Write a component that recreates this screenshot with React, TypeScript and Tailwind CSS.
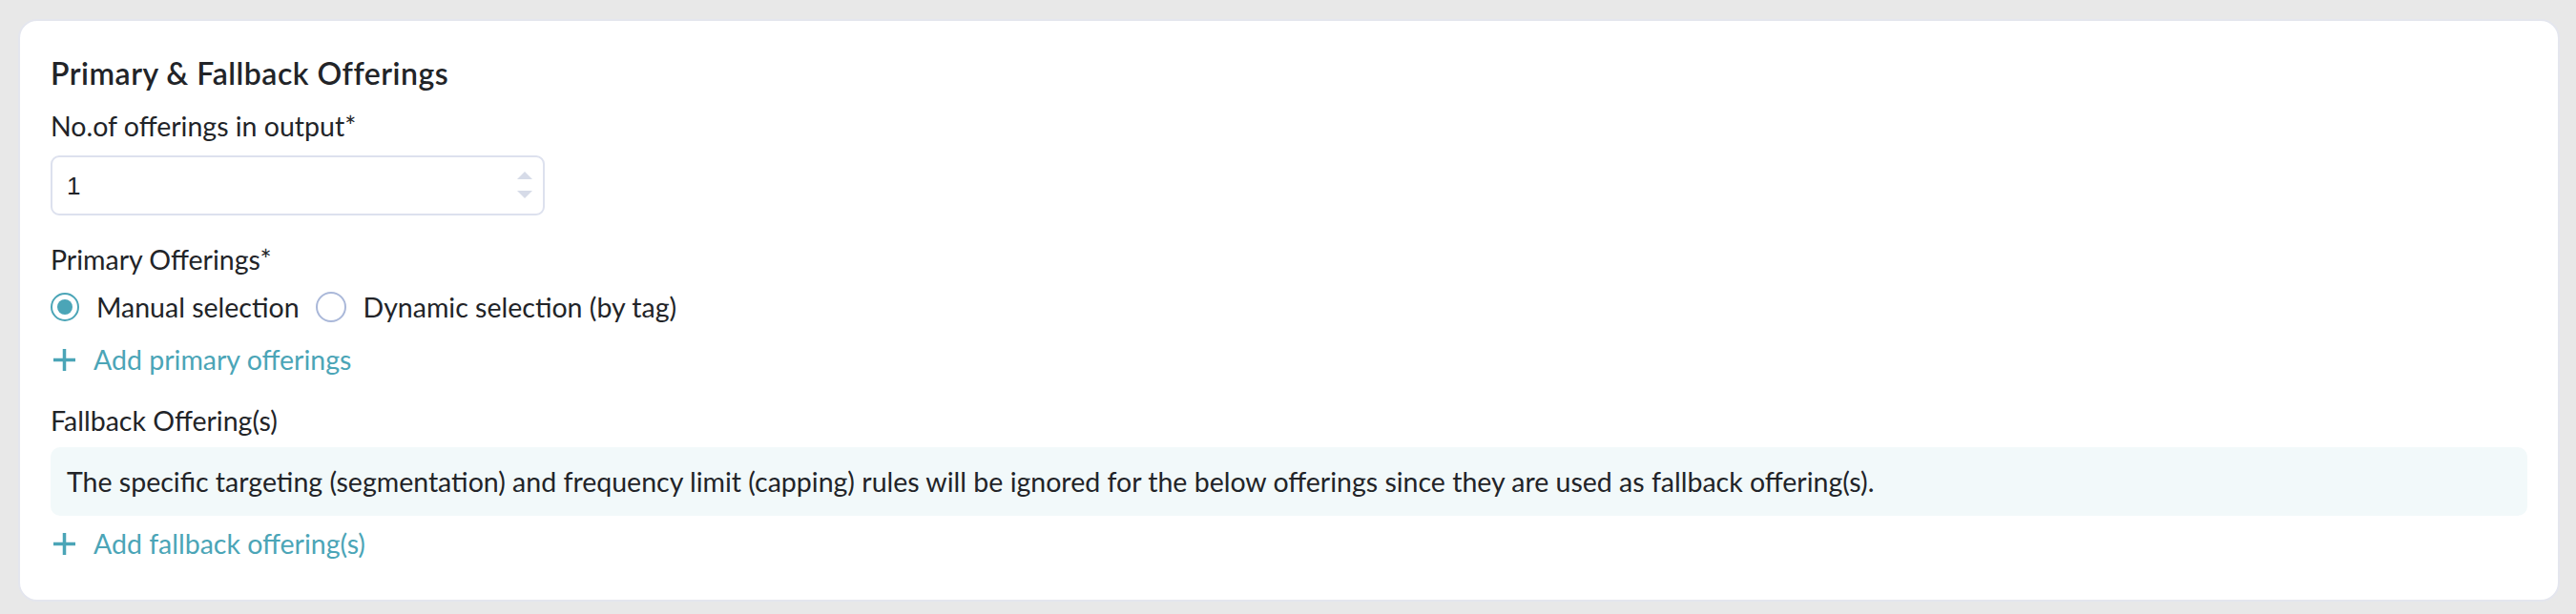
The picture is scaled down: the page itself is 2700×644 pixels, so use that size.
import React from "react";

const FONT = "font-['Lato','Noto_Sans',sans-serif]";

function PlusIcon() {
  return (
    <svg width="23" height="23" viewBox="0 0 23 23" className="shrink-0">
      <path d="M11.5 0v23M0 11.5h23" stroke="#4ba5b7" strokeWidth="3.5" />
    </svg>
  );
}

function AddLink({ label }: { label: string }) {
  return (
    <button
      type="button"
      className="flex h-[38px] items-center gap-[19px] pl-[3px] text-[28.5px] leading-[38px] text-[#4ba5b7]"
    >
      <PlusIcon />
      <span>{label}</span>
    </button>
  );
}

function Radio({ checked, label }: { checked?: boolean; label: string }) {
  return (
    <label className="flex items-center gap-[18px]">
      {checked ? (
        <span className="flex h-[30px] w-[30px] items-center justify-center rounded-full border-[2.5px] border-[#4ba5b7]">
          <span className="h-[16px] w-[16px] rounded-full bg-[#4ba5b7]" />
        </span>
      ) : (
        <span className="h-[32px] w-[32px] rounded-full border-2 border-[#aab8d9]" />
      )}
      <span>{label}</span>
    </label>
  );
}

export default function App() {
  const [count, setCount] = React.useState(1);
  const [mode, setMode] = React.useState<"manual" | "dynamic">("manual");

  return (
    <div className={`min-h-[644px] w-full bg-[#e8e8e8] pt-[20px] pb-[13px] pl-[19px] pr-[17px] ${FONT}`}>
      <section className="rounded-[20px] border-2 border-[#e4e6ee] bg-white px-[32px] pt-[36px] pb-[40px] text-[28.5px] leading-[38px] text-[#222428]">
        <h2 className="text-[32px] font-semibold tracking-[0.5px]">Primary &amp; Fallback Offerings</h2>

        <div className="mt-[17px]">No.of offerings in output*</div>
        <div className="mt-[12px] relative flex h-[63px] w-[518px] items-center rounded-[9px] border-2 border-[#dde1ee] pl-[15px] font-['Liberation_Sans',sans-serif] text-[26px]">
          {count}
          {/* spinner */}
          <div className="absolute right-[11px] top-[15px] flex flex-col gap-[12px]">
            <span
              onClick={() => setCount(count + 1)}
              className="h-0 w-0 border-x-[8px] border-b-[8px] border-x-transparent border-b-[#d6dbe8]"
            />
            <span
              onClick={() => setCount(Math.max(0, count - 1))}
              className="h-0 w-0 border-x-[8px] border-t-[8px] border-x-transparent border-t-[#d6dbe8]"
            />
          </div>
        </div>

        <div className="mt-[27px]">Primary Offerings*</div>
        <div className="mt-[12px] flex h-[38px] items-center gap-[17px]">
          <div onClick={() => setMode("manual")}>
            <Radio checked={mode === "manual"} label="Manual selection" />
          </div>
          <div onClick={() => setMode("dynamic")}>
            <Radio checked={mode === "dynamic"} label="Dynamic selection (by tag)" />
          </div>
        </div>
        <div className="mt-[17px]">
          <AddLink label="Add primary offerings" />
        </div>

        <div className="mt-[26px]">Fallback Offering(s)</div>
        <div className="mt-[9px] flex h-[72px] items-center rounded-[10px] bg-[#f2f9fa] px-[17px]">
          The specific targeting (segmentation) and frequency limit (capping) rules will be ignored for
          the below offerings since they are used as fallback offering(s).
        </div>
        <div className="mt-[10px]">
          <AddLink label="Add fallback offering(s)" />
        </div>
      </section>
    </div>
  );
}
